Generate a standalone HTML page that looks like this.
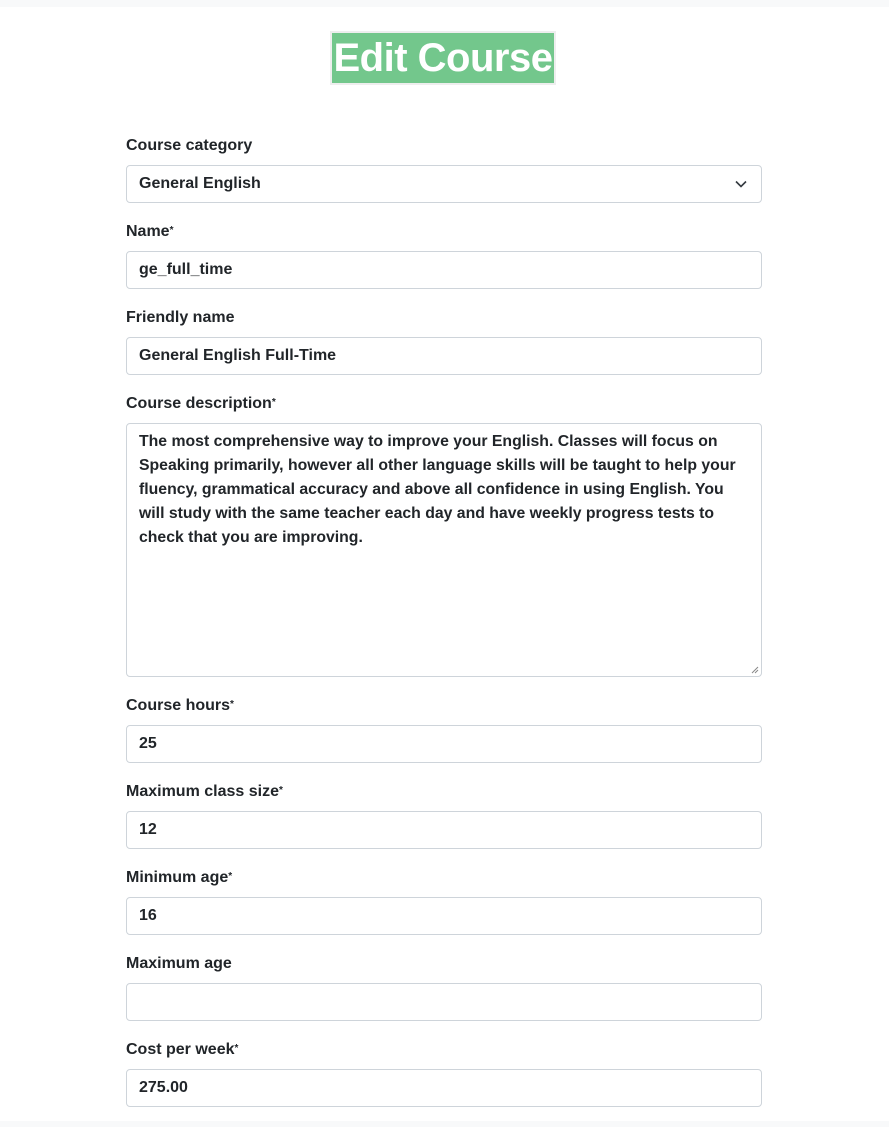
<!DOCTYPE html>
<html><head><meta charset="utf-8"><style>
*{box-sizing:border-box;margin:0;padding:0}
html,body{width:889px;height:1127px;background:#fff;overflow:hidden}
body{font-family:"Liberation Sans",sans-serif;color:#212529;position:relative;font-weight:bold}
.top{position:absolute;left:0;top:0;width:889px;height:7px;background:#f8f9fa}
.bot{position:absolute;left:0;top:1121px;width:889px;height:6px;background:#f8f9fa}
.title{position:absolute;left:330px;top:31px;width:226px;height:54px;border:2px solid #eeeeee;background:#73c78c;color:#fff;font-size:40px;text-align:center;line-height:50px;letter-spacing:-0.5px}
.lbl{position:absolute;left:126px;font-size:16px;line-height:18px}
.lbl sup{font-size:10px;vertical-align:top;position:relative;top:-1px}
.in{position:absolute;left:126px;width:636px;height:38px;border:1px solid #ced4da;border-radius:4px;font-size:16px;line-height:36px;padding-left:12px}
.ta{height:254px;line-height:24px;padding:6px 12px;font-size:15.8px;white-space:nowrap}
.chev{position:absolute;right:14px;top:14px}
.grip{position:absolute;right:2px;bottom:2px}
</style></head><body>
<div class="top"></div>
<div class="title">Edit Course</div>

<div class="lbl" style="top:137px">Course category</div>
<div class="in" style="top:165px">General English<svg class="chev" width="12" height="8" viewBox="0 0 12 8"><path d="M1 1.5l5 5 5-5" fill="none" stroke="#343a40" stroke-width="1.6"/></svg></div>

<div class="lbl" style="top:223px">Name<sup>*</sup></div>
<div class="in" style="top:251px">ge_full_time</div>

<div class="lbl" style="top:309px">Friendly name</div>
<div class="in" style="top:337px">General English Full-Time</div>

<div class="lbl" style="top:395px">Course description<sup>*</sup></div>
<div class="in ta" style="top:423px">The most comprehensive way to improve your English. Classes will focus on<br>Speaking primarily, however all other language skills will be taught to help your<br>fluency, grammatical accuracy and above all confidence in using English. You<br>will study with the same teacher each day and have weekly progress tests to<br>check that you are improving.<svg class="grip" width="8" height="8" viewBox="0 0 8 8"><path d="M7 1L1 7M7 4L4 7" stroke="#888" stroke-width="1"/></svg></div>

<div class="lbl" style="top:697px">Course hours<sup>*</sup></div>
<div class="in" style="top:725px">25</div>

<div class="lbl" style="top:783px">Maximum class size<sup>*</sup></div>
<div class="in" style="top:811px">12</div>

<div class="lbl" style="top:869px">Minimum age<sup>*</sup></div>
<div class="in" style="top:897px">16</div>

<div class="lbl" style="top:955px">Maximum age</div>
<div class="in" style="top:983px"></div>

<div class="lbl" style="top:1041px">Cost per week<sup>*</sup></div>
<div class="in" style="top:1069px">275.00</div>
<div class="bot"></div>
</body></html>
